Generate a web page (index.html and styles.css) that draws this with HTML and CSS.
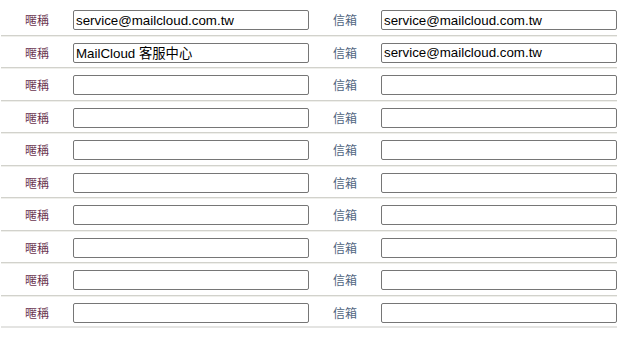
FILE: index.html
```html
<!DOCTYPE html>
<html lang="zh-Hant">
<head>
<meta charset="utf-8">
<link rel="stylesheet" href="styles.css">
</head>
<body>
<div class="list">
  <div class="row"><span class="lbl nick">暱稱</span><input class="field" value="service@mailcloud.com.tw"><span class="lbl mail">信箱</span><input class="field" value="service@mailcloud.com.tw"></div>
  <div class="row"><span class="lbl nick">暱稱</span><input class="field" value="MailCloud 客服中心"><span class="lbl mail">信箱</span><input class="field" value="service@mailcloud.com.tw"></div>
  <div class="row"><span class="lbl nick">暱稱</span><input class="field" value=""><span class="lbl mail">信箱</span><input class="field" value=""></div>
  <div class="row"><span class="lbl nick">暱稱</span><input class="field" value=""><span class="lbl mail">信箱</span><input class="field" value=""></div>
  <div class="row"><span class="lbl nick">暱稱</span><input class="field" value=""><span class="lbl mail">信箱</span><input class="field" value=""></div>
  <div class="row"><span class="lbl nick">暱稱</span><input class="field" value=""><span class="lbl mail">信箱</span><input class="field" value=""></div>
  <div class="row"><span class="lbl nick">暱稱</span><input class="field" value=""><span class="lbl mail">信箱</span><input class="field" value=""></div>
  <div class="row"><span class="lbl nick">暱稱</span><input class="field" value=""><span class="lbl mail">信箱</span><input class="field" value=""></div>
  <div class="row"><span class="lbl nick">暱稱</span><input class="field" value=""><span class="lbl mail">信箱</span><input class="field" value=""></div>
  <div class="row last"><span class="lbl nick">暱稱</span><input class="field" value=""><span class="lbl mail">信箱</span><input class="field" value=""></div>
</div>
</body>
</html>
```
FILE: styles.css
```css
html, body {
  margin: 0;
  padding: 0;
  background: #ffffff;
}
body {
  font-family: "Liberation Sans", Arial, "Noto Sans CJK TC", sans-serif;
}
.list {
  margin: 3px 0 0 1px;
  width: 616px;
}
.row {
  display: grid;
  grid-template-columns: 72px 236px 72px 236px;
  align-items: start;
  height: 32.5px;
  box-sizing: border-box;
  padding-top: 7px;
  border-bottom: 1px solid #d2d2cc;
  box-shadow: 0 1px 0 #efefeb;
}
.row.last {
  border-bottom: 2px solid #e4e4e2;
  box-shadow: none;
}
.lbl {
  font-family: "Noto Sans CJK TC", "Noto Sans CJK SC", sans-serif;
  font-size: 12px;
  line-height: 20px;
  text-align: center;
}
.nick { color: #6a3450; }
.mail { color: #4f6480; }
.field {
  box-sizing: border-box;
  width: 236px;
  height: 20px;
  margin: 0;
  padding: 1px 2px;
  border: 1px solid #767676;
  border-radius: 2px;
  font-family: "Liberation Sans", Arial, "Noto Sans CJK TC", sans-serif;
  font-size: 13.333px;
  color: #000000;
  background: #ffffff;
  outline: none;
}
```
